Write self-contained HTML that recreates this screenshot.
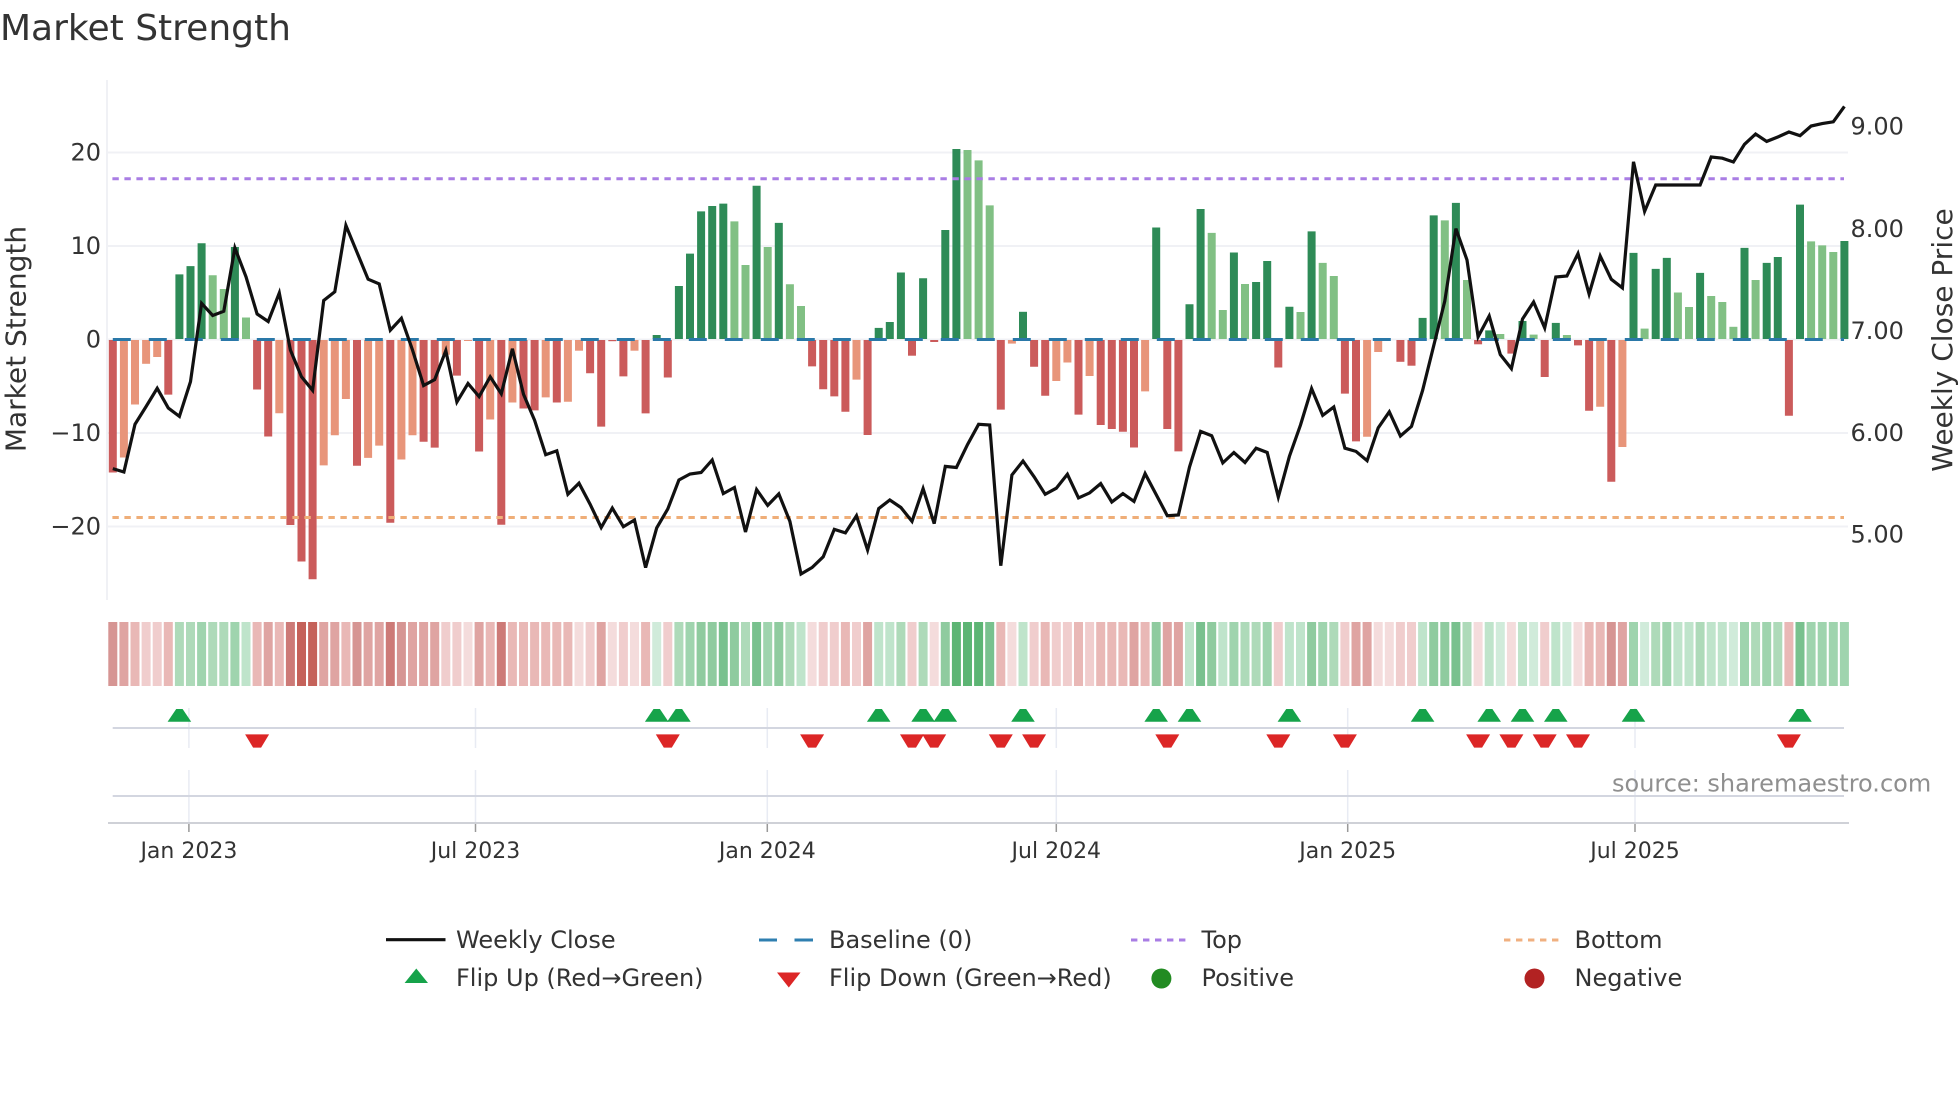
<!DOCTYPE html>
<html><head><meta charset="utf-8"><title>Market Strength</title>
<style>
html,body{margin:0;padding:0;background:#fff;width:1960px;height:1102px;overflow:hidden}
svg{display:block}
text{font-family:"DejaVu Sans","Liberation Sans",sans-serif;fill:#333}
.t{font-size:24px}
.x{font-size:22px;text-anchor:middle}
.G{stroke:#2e8b57}.L{stroke:#81c084}.R{stroke:#cb5b5b}.S{stroke:#e8957a}
#b path{stroke-width:8;fill:none}
#h path{stroke-width:9;fill:none}
.r1{stroke:#f4dcdc}.r2{stroke:#f0cdcd}.r3{stroke:#e9b8b6}.r4{stroke:#dfa4a2}.r5{stroke:#d69593}.r6{stroke:#cd7a77}.r7{stroke:#c5625a}
.g1{stroke:#d0ebda}.g2{stroke:#bfe4cb}.g3{stroke:#aedab9}.g4{stroke:#9fd4ae}.g5{stroke:#8fcb9f}.g6{stroke:#79c18e}.g7{stroke:#5db574}
</style></head><body>
<svg width="1960" height="1102" viewBox="0 0 1960 1102" xmlns="http://www.w3.org/2000/svg">
<defs>
<path id="u" d="M-3.2 709H3.2L11.8 721.8H-11.8Z" fill="#16a34a"/>
<path id="d" d="M-12 734.4H12L4 747.6H-4Z" fill="#dc2626"/>
</defs>
<text x="0" y="40" font-size="36">Market Strength</text>
<!-- grid -->
<g stroke="#f0f1f5" stroke-width="2" fill="none">
<path d="M107 80V600"/>
<path d="M107 152.5H1848M107 246H1848M107 339.5H1848M107 433H1848M107 526.5H1848"/>
</g>
<!-- bars -->
<g id="b">
<path class="R" d="M112.8 340V472.5"/><path class="S" d="M123.9 340V457.5"/><path class="S" d="M135 340V404.5"/><path class="S" d="M146.1 340V363.8"/><path class="S" d="M157.2 340V357"/><path class="R" d="M168.3 340V394.6"/>
<path class="G" d="M179.4 339V274.4"/><path class="G" d="M190.5 339V266.1"/><path class="G" d="M201.6 339V243.2"/><path class="L" d="M212.7 339V275.2"/><path class="L" d="M223.8 339V289"/><path class="G" d="M234.9 339V247"/><path class="L" d="M246 339V317.5"/>
<path class="R" d="M257.1 340V389.5"/><path class="R" d="M268.2 340V436.5"/><path class="S" d="M279.3 340V413.2"/><path class="R" d="M290.4 340V525"/><path class="R" d="M301.5 340V561.5"/><path class="R" d="M312.6 340V579.3"/><path class="S" d="M323.7 340V465.4"/><path class="S" d="M334.8 340V435.3"/><path class="S" d="M345.9 340V399"/><path class="R" d="M357 340V465.8"/><path class="S" d="M368.1 340V457.9"/><path class="S" d="M379.2 340V445.6"/><path class="R" d="M390.3 340V522.7"/><path class="S" d="M401.4 340V459.5"/><path class="S" d="M412.5 340V435.3"/><path class="R" d="M423.6 340V441.7"/><path class="R" d="M434.7 340V447.6"/><path class="S" d="M445.8 340V354.7"/><path class="R" d="M456.9 340V375.6"/><path class="S" d="M468 340V341"/><path class="R" d="M479.1 340V451.5"/><path class="S" d="M490.2 340V419.5"/><path class="R" d="M501.3 340V524.7"/><path class="S" d="M512.4 340V402.5"/><path class="R" d="M523.5 340V408.5"/><path class="R" d="M534.6 340V410.4"/><path class="S" d="M545.7 340V397.4"/><path class="R" d="M556.8 340V402.5"/><path class="S" d="M567.9 340V401.7"/><path class="S" d="M579 340V350.7"/><path class="R" d="M590.1 340V373.3"/><path class="R" d="M601.2 340V426.6"/><path class="R" d="M612.3 340V341.2"/><path class="R" d="M623.4 340V376.4"/><path class="S" d="M634.5 340V350.7"/><path class="R" d="M645.6 340V413.4"/>
<path class="G" d="M656.7 339V335"/><path class="R" d="M667.8 340V377.5"/>
<path class="G" d="M678.9 339V286"/><path class="G" d="M690 339V253.6"/><path class="G" d="M701.1 339V211.4"/><path class="G" d="M712.2 339V206"/><path class="G" d="M723.3 339V203.6"/><path class="L" d="M734.4 339V221.4"/><path class="L" d="M745.5 339V265"/><path class="G" d="M756.6 339V185.7"/><path class="L" d="M767.7 339V247"/><path class="G" d="M778.8 339V222.9"/><path class="L" d="M789.9 339V284.3"/><path class="L" d="M801 339V306"/>
<path class="R" d="M812.1 340V366.4"/><path class="R" d="M823.2 340V389.3"/><path class="R" d="M834.3 340V396.4"/><path class="R" d="M845.4 340V411.8"/><path class="S" d="M856.5 340V379.6"/><path class="R" d="M867.6 340V435"/>
<path class="G" d="M878.7 339V327.9"/><path class="G" d="M889.8 339V322"/><path class="G" d="M900.9 339V272.5"/><path class="R" d="M912 340V355.7"/><path class="G" d="M923.1 339V278.2"/><path class="R" d="M934.2 340V342"/><path class="G" d="M945.3 339V230"/><path class="G" d="M956.4 339V149"/><path class="L" d="M967.5 339V150"/><path class="L" d="M978.6 339V160.4"/><path class="L" d="M989.7 339V205.4"/>
<path class="R" d="M1000.8 340V409.6"/><path class="S" d="M1011.9 340V343.6"/><path class="G" d="M1023 339V311.8"/><path class="R" d="M1034.1 340V366.8"/><path class="R" d="M1045.2 340V395.7"/><path class="S" d="M1056.3 340V381"/><path class="S" d="M1067.4 340V362.5"/><path class="R" d="M1078.5 340V414.6"/><path class="S" d="M1089.6 340V376"/><path class="R" d="M1100.7 340V425"/><path class="R" d="M1111.8 340V429"/><path class="R" d="M1122.9 340V431.8"/><path class="R" d="M1134 340V447.5"/><path class="S" d="M1145.1 340V391.4"/>
<path class="G" d="M1156.2 339V227.5"/><path class="R" d="M1167.3 340V429"/><path class="R" d="M1178.4 340V451.4"/>
<path class="G" d="M1189.5 339V304.3"/><path class="G" d="M1200.6 339V209"/><path class="L" d="M1211.7 339V232.9"/><path class="L" d="M1222.8 339V310"/><path class="G" d="M1233.9 339V252.5"/><path class="L" d="M1245 339V284"/><path class="G" d="M1256.1 339V282"/><path class="G" d="M1267.2 339V261"/><path class="R" d="M1278.3 340V367.5"/><path class="G" d="M1289.4 339V306.8"/><path class="L" d="M1300.5 339V312"/><path class="G" d="M1311.6 339V231.4"/><path class="L" d="M1322.7 339V262.9"/><path class="L" d="M1333.8 339V276"/>
<path class="R" d="M1344.9 340V393.6"/><path class="R" d="M1356 340V441.4"/><path class="S" d="M1367.1 340V436.8"/><path class="S" d="M1378.2 340V352"/><path class="R" d="M1400.4 340V361.8"/><path class="R" d="M1411.5 340V365.7"/>
<path class="G" d="M1422.6 339V317.9"/><path class="G" d="M1433.7 339V215.4"/><path class="L" d="M1444.8 339V220.4"/><path class="G" d="M1455.9 339V202.9"/><path class="L" d="M1467 339V280"/><path class="R" d="M1478.1 340V344.3"/><path class="G" d="M1489.2 339V330.4"/><path class="L" d="M1500.3 339V334"/><path class="R" d="M1511.4 340V353.6"/><path class="G" d="M1522.5 339V321"/><path class="L" d="M1533.6 339V334.6"/><path class="R" d="M1544.7 340V377"/><path class="G" d="M1555.8 339V322.9"/><path class="L" d="M1566.9 339V335"/><path class="R" d="M1578 340V345.4"/><path class="R" d="M1589.1 340V410.7"/><path class="S" d="M1600.2 340V406.8"/><path class="R" d="M1611.3 340V481.8"/><path class="S" d="M1622.4 340V447"/>
<path class="G" d="M1633.5 339V252.9"/><path class="L" d="M1644.6 339V328.6"/><path class="G" d="M1655.7 339V268.9"/><path class="G" d="M1666.8 339V257.9"/><path class="L" d="M1677.9 339V292.5"/><path class="L" d="M1689 339V307"/><path class="G" d="M1700.1 339V272.9"/><path class="L" d="M1711.2 339V296"/><path class="L" d="M1722.3 339V302"/><path class="L" d="M1733.4 339V326.8"/><path class="G" d="M1744.5 339V247.9"/><path class="L" d="M1755.6 339V280"/><path class="G" d="M1766.7 339V262.9"/><path class="G" d="M1777.8 339V257"/><path class="R" d="M1788.9 340V415.7"/><path class="G" d="M1800 339V204.6"/><path class="L" d="M1811.1 339V241.4"/><path class="L" d="M1822.2 339V245.4"/><path class="L" d="M1833.3 339V252"/><path class="G" d="M1844.4 339V241"/>
</g>
<!-- reference lines -->
<path d="M112.8 339.5H1844" stroke="#2a78a8" stroke-width="3" stroke-dasharray="18 18" fill="none"/>
<path d="M112.4 178.8H1844" stroke="#a97de4" stroke-width="3" stroke-dasharray="6.4 5.6" fill="none"/>
<path d="M112.4 517.5H1844" stroke="#efae78" stroke-width="3" stroke-dasharray="6.4 5.6" fill="none"/>
<!-- price line -->
<polyline fill="none" stroke="#111" stroke-width="3.2" stroke-linejoin="miter" points="112.8,468.6 123.9,472 135,424.3 146.1,406.5 157.2,388.3 168.3,408 179.4,416.4 190.5,381.6 201.6,303.3 212.7,315.5 223.8,311.2 234.9,247.9 246,276.8 257.1,314 268.2,321.5 279.3,293 290.4,350 301.5,376.8 312.6,390.3 323.7,300.5 334.8,291.8 345.9,225.4 357,252.3 368.1,279.2 379.2,283.9 390.3,330.2 401.4,318.3 412.5,350 423.6,385.5 434.7,379.6 445.8,350.7 456.9,402 468,383.5 479.1,396.6 490.2,376.8 501.3,393.8 512.4,348.8 523.5,394.2 534.6,420.3 545.7,454.7 556.8,450.8 567.9,494.3 579,483.2 590.1,504.2 601.2,527.5 612.3,508.1 623.4,526.7 634.5,520 645.6,567.6 656.7,527.9 667.8,508.9 678.9,480 690,474 701.1,472.5 712.2,460 723.3,493.6 734.4,487.5 745.5,532 756.6,489.6 767.7,505.4 778.8,493.9 789.9,521.4 801,574 812.1,567.5 823.2,556.8 834.3,529.3 845.4,532.9 856.5,515.7 867.6,550 878.7,508.6 889.8,500 900.9,507.5 912,521.4 923.1,488.6 934.2,523.6 945.3,466.4 956.4,467.5 967.5,444.6 978.6,424.3 989.7,425 1000.8,565.7 1011.9,475 1023,461 1034.1,476.8 1045.2,494.3 1056.3,488.2 1067.4,474.3 1078.5,497.9 1089.6,492.9 1100.7,483.6 1111.8,502 1122.9,493.6 1134,501.4 1145.1,473.6 1156.2,494.6 1167.3,515.7 1178.4,515 1189.5,467 1200.6,431.4 1211.7,435.7 1222.8,462.9 1233.9,452.5 1245,462.5 1256.1,448.2 1267.2,452.5 1278.3,497 1289.4,456.4 1300.5,425 1311.6,388.6 1322.7,415.4 1333.8,407 1344.9,448.2 1356,451.4 1367.1,460.7 1378.2,427.9 1389.3,411.8 1400.4,436 1411.5,426.4 1422.6,390.4 1433.7,345.7 1444.8,301 1455.9,228.6 1467,260 1478.1,336.8 1489.2,316 1500.3,354.6 1511.4,368.6 1522.5,319 1533.6,302 1544.7,327.9 1555.8,277 1566.9,276 1578,253.6 1589.1,294 1600.2,256 1611.3,279.3 1622.4,287.9 1633.5,161.8 1644.6,211.4 1655.7,185 1666.8,185 1677.9,185 1689,185 1700.1,185 1711.2,157 1722.3,158.2 1733.4,162 1744.5,144.3 1755.6,134 1766.7,141.4 1777.8,137 1788.9,132 1800,135.7 1811.1,126 1822.2,123.6 1833.3,121.8 1844.4,106.4"/>
<!-- y labels -->
<text class="t" x="101" y="160.5" text-anchor="end">20</text>
<text class="t" x="101" y="254" text-anchor="end">10</text>
<text class="t" x="101" y="347.5" text-anchor="end">0</text>
<text class="t" x="101" y="441" text-anchor="end">−10</text>
<text class="t" x="101" y="534.5" text-anchor="end">−20</text>
<text class="t" x="1850.5" y="134.5">9.00</text>
<text class="t" x="1850.5" y="237">8.00</text>
<text class="t" x="1850.5" y="339">7.00</text>
<text class="t" x="1850.5" y="441">6.00</text>
<text class="t" x="1850.5" y="542.5">5.00</text>
<text transform="translate(25.5 339) rotate(-90)" text-anchor="middle" font-size="28">Market Strength</text>
<text transform="translate(1952 340) rotate(-90)" text-anchor="middle" font-size="28">Weekly Close Price</text>
<!-- heat strip -->
<g id="h">
<path class="r5" d="M112.8 622v64"/><path class="r4" d="M123.9 622v64"/><path class="r3" d="M135 622v64"/><path class="r2" d="M146.1 622v64"/><path class="r2" d="M157.2 622v64"/><path class="r3" d="M168.3 622v64"/><path class="g3" d="M179.4 622v64"/><path class="g3" d="M190.5 622v64"/><path class="g4" d="M201.6 622v64"/><path class="g3" d="M212.7 622v64"/><path class="g3" d="M223.8 622v64"/><path class="g4" d="M234.9 622v64"/><path class="g2" d="M246 622v64"/><path class="r3" d="M257.1 622v64"/><path class="r4" d="M268.2 622v64"/><path class="r3" d="M279.3 622v64"/><path class="r6" d="M290.4 622v64"/><path class="r7" d="M301.5 622v64"/><path class="r7" d="M312.6 622v64"/><path class="r4" d="M323.7 622v64"/><path class="r4" d="M334.8 622v64"/><path class="r3" d="M345.9 622v64"/><path class="r5" d="M357 622v64"/><path class="r4" d="M368.1 622v64"/><path class="r4" d="M379.2 622v64"/><path class="r6" d="M390.3 622v64"/><path class="r5" d="M401.4 622v64"/><path class="r4" d="M412.5 622v64"/><path class="r4" d="M423.6 622v64"/><path class="r4" d="M434.7 622v64"/><path class="r2" d="M445.8 622v64"/><path class="r2" d="M456.9 622v64"/><path class="r1" d="M468 622v64"/><path class="r4" d="M479.1 622v64"/><path class="r3" d="M490.2 622v64"/><path class="r6" d="M501.3 622v64"/><path class="r3" d="M512.4 622v64"/><path class="r3" d="M523.5 622v64"/><path class="r3" d="M534.6 622v64"/><path class="r3" d="M545.7 622v64"/><path class="r3" d="M556.8 622v64"/><path class="r3" d="M567.9 622v64"/><path class="r1" d="M579 622v64"/><path class="r2" d="M590.1 622v64"/><path class="r4" d="M601.2 622v64"/><path class="r1" d="M612.3 622v64"/><path class="r2" d="M623.4 622v64"/><path class="r1" d="M634.5 622v64"/><path class="r3" d="M645.6 622v64"/><path class="g1" d="M656.7 622v64"/><path class="r2" d="M667.8 622v64"/><path class="g3" d="M678.9 622v64"/><path class="g4" d="M690 622v64"/><path class="g5" d="M701.1 622v64"/><path class="g5" d="M712.2 622v64"/><path class="g6" d="M723.3 622v64"/><path class="g5" d="M734.4 622v64"/><path class="g3" d="M745.5 622v64"/><path class="g6" d="M756.6 622v64"/><path class="g4" d="M767.7 622v64"/><path class="g5" d="M778.8 622v64"/><path class="g3" d="M789.9 622v64"/><path class="g2" d="M801 622v64"/><path class="r1" d="M812.1 622v64"/><path class="r2" d="M823.2 622v64"/><path class="r2" d="M834.3 622v64"/><path class="r3" d="M845.4 622v64"/><path class="r2" d="M856.5 622v64"/><path class="r4" d="M867.6 622v64"/><path class="g2" d="M878.7 622v64"/><path class="g2" d="M889.8 622v64"/><path class="g3" d="M900.9 622v64"/><path class="r2" d="M912 622v64"/><path class="g3" d="M923.1 622v64"/><path class="r1" d="M934.2 622v64"/><path class="g5" d="M945.3 622v64"/><path class="g7" d="M956.4 622v64"/><path class="g7" d="M967.5 622v64"/><path class="g7" d="M978.6 622v64"/><path class="g6" d="M989.7 622v64"/><path class="r3" d="M1000.8 622v64"/><path class="r1" d="M1011.9 622v64"/><path class="g2" d="M1023 622v64"/><path class="r2" d="M1034.1 622v64"/><path class="r3" d="M1045.2 622v64"/><path class="r2" d="M1056.3 622v64"/><path class="r2" d="M1067.4 622v64"/><path class="r3" d="M1078.5 622v64"/><path class="r2" d="M1089.6 622v64"/><path class="r3" d="M1100.7 622v64"/><path class="r3" d="M1111.8 622v64"/><path class="r3" d="M1122.9 622v64"/><path class="r4" d="M1134 622v64"/><path class="r3" d="M1145.1 622v64"/><path class="g5" d="M1156.2 622v64"/><path class="r4" d="M1167.3 622v64"/><path class="r4" d="M1178.4 622v64"/><path class="g2" d="M1189.5 622v64"/><path class="g6" d="M1200.6 622v64"/><path class="g5" d="M1211.7 622v64"/><path class="g2" d="M1222.8 622v64"/><path class="g4" d="M1233.9 622v64"/><path class="g3" d="M1245 622v64"/><path class="g3" d="M1256.1 622v64"/><path class="g4" d="M1267.2 622v64"/><path class="r2" d="M1278.3 622v64"/><path class="g2" d="M1289.4 622v64"/><path class="g2" d="M1300.5 622v64"/><path class="g5" d="M1311.6 622v64"/><path class="g4" d="M1322.7 622v64"/><path class="g3" d="M1333.8 622v64"/><path class="r2" d="M1344.9 622v64"/><path class="r4" d="M1356 622v64"/><path class="r4" d="M1367.1 622v64"/><path class="r1" d="M1378.2 622v64"/><path class="r1" d="M1389.3 622v64"/><path class="r2" d="M1400.4 622v64"/><path class="r2" d="M1411.5 622v64"/><path class="g2" d="M1422.6 622v64"/><path class="g5" d="M1433.7 622v64"/><path class="g5" d="M1444.8 622v64"/><path class="g6" d="M1455.9 622v64"/><path class="g3" d="M1467 622v64"/><path class="r1" d="M1478.1 622v64"/><path class="g2" d="M1489.2 622v64"/><path class="g1" d="M1500.3 622v64"/><path class="r1" d="M1511.4 622v64"/><path class="g2" d="M1522.5 622v64"/><path class="g1" d="M1533.6 622v64"/><path class="r2" d="M1544.7 622v64"/><path class="g2" d="M1555.8 622v64"/><path class="g1" d="M1566.9 622v64"/><path class="r1" d="M1578 622v64"/><path class="r3" d="M1589.1 622v64"/><path class="r3" d="M1600.2 622v64"/><path class="r5" d="M1611.3 622v64"/><path class="r4" d="M1622.4 622v64"/><path class="g4" d="M1633.5 622v64"/><path class="g1" d="M1644.6 622v64"/><path class="g3" d="M1655.7 622v64"/><path class="g4" d="M1666.8 622v64"/><path class="g2" d="M1677.9 622v64"/><path class="g2" d="M1689 622v64"/><path class="g3" d="M1700.1 622v64"/><path class="g2" d="M1711.2 622v64"/><path class="g2" d="M1722.3 622v64"/><path class="g1" d="M1733.4 622v64"/><path class="g4" d="M1744.5 622v64"/><path class="g3" d="M1755.6 622v64"/><path class="g4" d="M1766.7 622v64"/><path class="g3" d="M1777.8 622v64"/><path class="r3" d="M1788.9 622v64"/><path class="g6" d="M1800 622v64"/><path class="g4" d="M1811.1 622v64"/><path class="g4" d="M1822.2 622v64"/><path class="g4" d="M1833.3 622v64"/><path class="g4" d="M1844.4 622v64"/>
</g>
<!-- vertical faint grid -->
<g stroke="#e8ebf3" stroke-width="1.5" fill="none">
<path d="M188.9 708V748M188.9 770V822M475.5 708V748M475.5 770V822M767.3 708V748M767.3 770V822M1056.3 708V748M1056.3 770V822M1347.7 708V748M1347.7 770V822M1635 708V748M1635 770V822"/>
</g>
<!-- axes -->
<path d="M112.7 728H1844M112.7 796H1844" stroke="#d3d6e0" stroke-width="2" fill="none"/>
<path d="M108 823H1849" stroke="#cfd1d7" stroke-width="2" fill="none"/>
<path d="M188.9 824V832M475.5 824V832M767.3 824V832M1056.3 824V832M1347.7 824V832M1635 824V832" stroke="#999" stroke-width="1.5" fill="none"/>
<!-- flip markers -->
<use href="#u" x="179.4"/><use href="#u" x="656.7"/><use href="#u" x="678.9"/><use href="#u" x="878.7"/><use href="#u" x="923.1"/><use href="#u" x="945.3"/><use href="#u" x="1023"/><use href="#u" x="1156.2"/><use href="#u" x="1189.5"/><use href="#u" x="1289.4"/><use href="#u" x="1422.6"/><use href="#u" x="1489.2"/><use href="#u" x="1522.5"/><use href="#u" x="1555.8"/><use href="#u" x="1633.5"/><use href="#u" x="1800"/>
<use href="#d" x="257.1"/><use href="#d" x="667.8"/><use href="#d" x="812.1"/><use href="#d" x="912"/><use href="#d" x="934.2"/><use href="#d" x="1000.8"/><use href="#d" x="1034.1"/><use href="#d" x="1167.3"/><use href="#d" x="1278.3"/><use href="#d" x="1344.9"/><use href="#d" x="1478.1"/><use href="#d" x="1511.4"/><use href="#d" x="1544.7"/><use href="#d" x="1578"/><use href="#d" x="1788.9"/>
<!-- x labels -->
<text class="x" x="188.9" y="858">Jan 2023</text>
<text class="x" x="475.5" y="858">Jul 2023</text>
<text class="x" x="767.3" y="858">Jan 2024</text>
<text class="x" x="1056.3" y="858">Jul 2024</text>
<text class="x" x="1347.7" y="858">Jan 2025</text>
<text class="x" x="1635" y="858">Jul 2025</text>
<text x="1612" y="791.5" font-size="24" style="fill:#8f8f8f">source: sharemaestro.com</text>
<!-- legend -->
<path d="M386 939.7H445.5" stroke="#111" stroke-width="3.2" fill="none"/>
<path d="M759 940H777M794.5 940H813" stroke="#2f7fb0" stroke-width="3" fill="none"/>
<path d="M1131 940H1186" stroke="#a97de4" stroke-width="3" stroke-dasharray="6.4 5.6" fill="none"/>
<path d="M1504 940H1559" stroke="#f0b080" stroke-width="3" stroke-dasharray="6.4 5.6" fill="none"/>
<path d="M416.3 968.5L428 983H404.6Z" fill="#16a34a"/>
<path d="M788.8 987.5L800.5 972.5H777Z" fill="#dc2626"/>
<ellipse cx="1161.4" cy="978.5" rx="10" ry="10" fill="#228b22"/>
<ellipse cx="1534.5" cy="978.5" rx="10" ry="10" fill="#b22222"/>
<text class="t" x="456" y="948">Weekly Close</text>
<text class="t" x="829" y="948">Baseline (0)</text>
<text class="t" x="1201.5" y="948">Top</text>
<text class="t" x="1574.5" y="948">Bottom</text>
<text class="t" x="456" y="986">Flip Up (Red→Green)</text>
<text class="t" x="829" y="986">Flip Down (Green→Red)</text>
<text class="t" x="1201.5" y="986">Positive</text>
<text class="t" x="1574.5" y="986">Negative</text>
</svg>
</body></html>
